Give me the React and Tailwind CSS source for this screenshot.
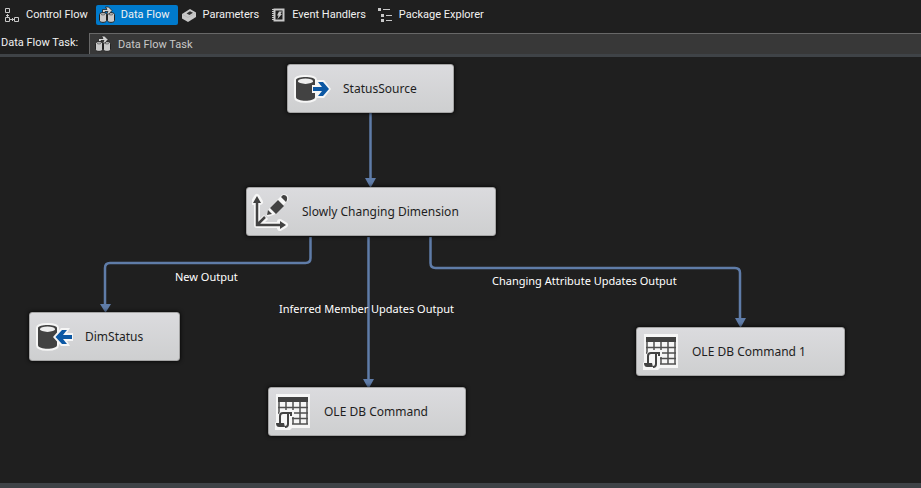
import React from "react";

const LINE = "#5f7ca8";

function ControlFlowIcon() {
  return (
    <svg width="16" height="16" viewBox="0 0 16 16" fill="none" stroke="#c8c8c8" aria-hidden="true">
      <path d="M1.500 1.500h4v4h-4zM1.500 10.500h4v4h-4zM10.500 10.500h4v4h-4zM3.500 7v3M2 8.500h3M6 12.500h4M8.500 11v3" />
    </svg>
  );
}

function DataFlowIcon() {
  return (
    <svg className="max-w-none shrink-0" width="18" height="18" viewBox="0 0 18 18" aria-hidden="true">
      <path d="M1.500 8.500c0-2.500 7-2.500 7 0v6c0 2.500-7 2.500-7 0zM9.500 8.500c0-2.500 7-2.500 7 0v6c0 2.500-7 2.500-7 0z" fill="#c8c8c8" stroke="#222" />
      <path d="M3 8.500q2 1 4 0M11 8.500q2 1 4 0" fill="none" stroke="#555" strokeWidth=".8" />
      <path d="M4.500 6.500V3.500h4.500L7.500 1h3l3.500 3.500L11 8H8.500L10 5.500H7v1z" fill="#d4d4d4" stroke="#222" strokeWidth=".8" />
    </svg>
  );
}

function ParametersIcon() {
  return (
    <svg width="16" height="16" viewBox="0 0 16 16" aria-hidden="true">
      <path d="M1 7 9 2l6 3.500v4.500L7 15 1 11.500z" fill="#c8c8c8" />
      <path d="M1.500 7.500 7 10.500 14.500 6" fill="none" stroke="#aaa" strokeWidth=".5" />
      <path d="M5.500 6.500 9 4.300l3 1.500-3.500 2.200z" fill="#333" />
    </svg>
  );
}

function EventIcon() {
  return (
    <svg width="16" height="16" viewBox="0 0 16 16" aria-hidden="true">
      <path d="M4.500 2.500h9v11h-9z" fill="none" stroke="#c8c8c8" strokeWidth="2" />
      <path d="M2 2.500h2M2 4.500h2M2 6.500h2M2 8.500h2M2 10.500h2M2 12.500h2" stroke="#c8c8c8" />
      <path d="M9 4.500h3L10.500 7H12l-4.500 5L8.500 8.500H7z" fill="#c8c8c8" />
    </svg>
  );
}

function ExplorerIcon() {
  return (
    <svg width="16" height="16" viewBox="0 0 16 16" aria-hidden="true">
      <path d="M1 1h3v3H1zM4 7h3v3H4zM4 12h3v3H4z" fill="#c8c8c8" />
      <path d="M6 2.500h7M9 8.500h6M9 13.500h6" stroke="#c8c8c8" />
    </svg>
  );
}

const DRUM = "M2 5C2 1 21 1 21 5v17c0 5-19 5-19 0z";

function Drum() {
  return (
    <>
      <path d={DRUM} fill="#f6f6f6" stroke="#f6f6f6" strokeWidth="4" />
      <path d={DRUM} fill="#424242" />
      <ellipse cx="11.500" cy="6.200" rx="7.500" ry="2.700" fill="#eee" />
    </>
  );
}

function SourceIcon() {
  return (
    <svg className="overflow-visible" width="36" height="28" viewBox="0 0 36 28" aria-hidden="true">
      <Drum />
      <path d="M18 10h5l-2-5h9l7 9-7 9h-9l2-5h-5z" fill="#f6f6f6" />
      <path d="M19 12h9l-4-5h5l6 7-6 7h-5l4-5h-9z" fill="#0c58a4" />
    </svg>
  );
}

function DestinationIcon() {
  return (
    <svg className="overflow-visible" width="36" height="28" viewBox="0 0 36 28" aria-hidden="true">
      <Drum />
      <path d="M37 10h-6l3-5h-9l-8 9 8 9h9l-3-5h6z" fill="#f6f6f6" />
      <path d="M36 12h-9l4-5h-5l-6.500 7 6.500 7h5l-4-5h9z" fill="#0c58a4" />
    </svg>
  );
}

function DimensionIcon() {
  return (
    <svg width="38" height="38" viewBox="0 0 38 38" aria-hidden="true">
      <path d="M5 6v26h26M6 32l8-8M2 9l3-5 3 5zM28 29l5 3-5 3z" fill="none" stroke="#f6f6f6" strokeWidth="6" strokeLinejoin="round" />
      <path d="m16 22 2-5L31 3q4-1 4 3L22 20z" fill="#f6f6f6" stroke="#f6f6f6" strokeWidth="3" strokeLinejoin="round" />
      <path d="M5 7v25h25M6 31l7-7" fill="none" stroke="#424242" strokeWidth="2.500" />
      <path d="M1 10 5 3l4 7zM28 28l6 4-6 4z" fill="#424242" />
      <path d="m18 15 8-8 6 6-8 8zM29 4l2-2q5 0 4 5l-1 2zM16 17l4 4-5 1z" fill="#424242" />
    </svg>
  );
}

function CommandIcon() {
  return (
    <svg width="36" height="36" viewBox="0 0 36 36" aria-hidden="true">
      <path d="M1 0h34v34H17l-2 2H0v-7l1-1z" fill="#f6f6f6" />
      <path d="M3 3h30v5H3z" fill="#424242" />
      <path d="M4 8v11M11 8v8M18 8v22M25 8v22M32 8v22M3 13.500h30M3 19h30M17 24.500h16M17 30h16" fill="none" stroke="#505050" strokeWidth="1.500" />
      <path d="M5 30V21q0-4 4-4h9v5h-3v8q0 4-4 4H2v-4z" fill="#f6f6f6" stroke="#f6f6f6" strokeWidth="2" />
      <path d="M5 29v-7q0-3 3-3h8v3M13 20v10q0 3-3 3" fill="none" stroke="#424242" strokeWidth="2" />
      <path d="M1 29h8l1 4H4q-3 0-3-4z" fill="#424242" />
    </svg>
  );
}

const tabs = [
  { label: "Control Flow", Icon: ControlFlowIcon },
  { label: "Data Flow", Icon: DataFlowIcon, active: true },
  { label: "Parameters", Icon: ParametersIcon },
  { label: "Event Handlers", Icon: EventIcon },
  { label: "Package Explorer", Icon: ExplorerIcon },
];

const nodes = [
  { label: "StatusSource", Icon: SourceIcon, place: "left-[287px] top-[7px] w-[167px]" },
  { label: "Slowly Changing Dimension", Icon: DimensionIcon, place: "left-[246px] top-[130px] w-[250px]" },
  { label: "DimStatus", Icon: DestinationIcon, place: "left-[29px] top-[255px] w-[151px]" },
  { label: "OLE DB Command", Icon: CommandIcon, place: "left-[268px] top-[330px] w-[198px]" },
  { label: "OLE DB Command 1", Icon: CommandIcon, place: "left-[636px] top-[270px] w-[209px]" },
];

const outputs = [
  { label: "New Output", place: "left-[175px] top-[212px]" },
  { label: "Inferred Member Updates Output", place: "left-[279px] top-[244px]" },
  { label: "Changing Attribute Updates Output", place: "left-[492px] top-[216px]" },
];

export default function App() {
  return (
    <div className="flex h-screen flex-col overflow-hidden bg-[#1f1f1f] font-['Noto_Sans',sans-serif] text-[11px] leading-4 text-[#f1f1f1]">
      <nav className="flex h-[33px] shrink-0 items-start pt-[5px] pl-px font-['Roboto',sans-serif]">
        {tabs.map(({ label, Icon, active }) => (
          <button
            key={label}
            type="button"
            className={`flex h-5 items-center gap-1.5 whitespace-nowrap pr-2 pb-px pl-[3px] ${active ? "rounded-xs bg-[#007acc]" : ""}`}
          >
            <span className="flex w-4 shrink-0 justify-center"><Icon /></span>
            {label}
          </button>
        ))}
      </nav>
      <div className="flex h-[21px] shrink-0 font-['Roboto',sans-serif]">
        <label htmlFor="task" className="w-[89px] shrink-0 pt-0.5 pl-px whitespace-nowrap">Data Flow Task:</label>
        <div className="grid flex-1 items-center border-t border-l border-[#686868] bg-[#383838]">
          <span className="pointer-events-none col-start-1 row-start-1 pl-1"><DataFlowIcon /></span>
          <select id="task" className="col-start-1 row-start-1 h-5 w-full appearance-none bg-transparent pt-0.5 pl-7 text-[#c8c8c8]">
            <option>Data Flow Task</option>
          </select>
        </div>
      </div>
      <main className="relative flex-1 border-t-3 border-b-5 border-[#3f4347]">
        <svg className="absolute top-0 left-0" width="921" height="428" fill="none" stroke={LINE} strokeWidth="2.500" aria-hidden="true">
          <path d="M370.500 56v66M310.500 180v21q0 5-5 5H110q-5 0-5 5v37M368.500 180v142M430.500 180v26q0 5 5 5H735q5 0 5 5v46" />
          <path d="M365 121h11l-5 9h-1zM100 247h11l-5 8h-1zM363 322h11l-5 9h-1zM735 261h11l-5 9h-1z" fill={LINE} stroke="none" />
        </svg>
        {nodes.map(({ label, Icon, place }) => (
          <button
            key={label}
            type="button"
            className={`absolute flex h-[49px] items-center gap-3 rounded-[3px] border border-[#a4a4a4] bg-linear-to-b from-[#dbdbde] to-[#cecfd0] pl-[5px] text-xs whitespace-nowrap text-[#1e1e1e] shadow-[0_0_4px_#000] ${place}`}
          >
            <span className="flex w-[38px] shrink-0 justify-center"><Icon /></span>
            {label}
          </button>
        ))}
        {outputs.map(({ label, place }) => (
          <span key={label} className={`absolute whitespace-nowrap text-white ${place}`}>{label}</span>
        ))}
      </main>
    </div>
  );
}
